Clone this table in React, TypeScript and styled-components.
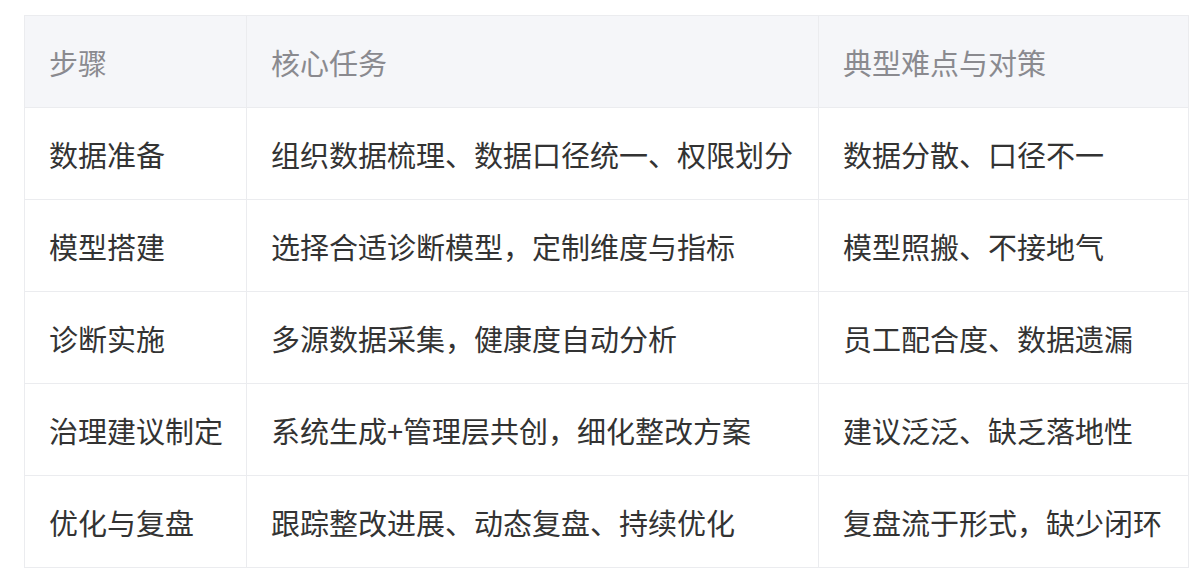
import React from "react";
import styled, { createGlobalStyle } from "styled-components";

const Global = createGlobalStyle`
  html, body { margin: 0; padding: 0; background: #ffffff; }
  body { font-family: "Noto Sans CJK SC", "Noto Sans", sans-serif; }
`;

const Page = styled.div`
  padding: 15px 12px 0 24px;
`;

const Table = styled.table`
  border-collapse: collapse;
  table-layout: fixed;
  width: 1164px;
  border: 1px solid #ebecef;
`;

const Col = styled.col<{ $w: number }>`
  width: ${(p) => p.$w}px;
`;

const HeadCell = styled.th`
  height: 91px;
  padding: 0 24px;
  text-align: left;
  vertical-align: middle;
  background: #f5f6f9;
  color: #8a8a8f;
  font-size: 29px;
  font-weight: 400;
  border: 1px solid #ebecef;
  white-space: nowrap;
`;

const Cell = styled.td`
  height: 91px;
  padding: 0 24px;
  text-align: left;
  vertical-align: middle;
  color: #333333;
  font-size: 29px;
  font-weight: 400;
  border: 1px solid #ebecef;
  white-space: nowrap;
`;

const rows = [
  ["数据准备", "组织数据梳理、数据口径统一、权限划分", "数据分散、口径不一"],
  ["模型搭建", "选择合适诊断模型，定制维度与指标", "模型照搬、不接地气"],
  ["诊断实施", "多源数据采集，健康度自动分析", "员工配合度、数据遗漏"],
  ["治理建议制定", "系统生成+管理层共创，细化整改方案", "建议泛泛、缺乏落地性"],
  ["优化与复盘", "跟踪整改进展、动态复盘、持续优化", "复盘流于形式，缺少闭环"],
];

export default function App() {
  return (
    <>
      <Global />
      <Page>
        <Table>
          <colgroup>
            <Col $w={222} />
            <Col $w={572} />
            <Col $w={370} />
          </colgroup>
          <thead>
            <tr>
              <HeadCell>步骤</HeadCell>
              <HeadCell>核心任务</HeadCell>
              <HeadCell>典型难点与对策</HeadCell>
            </tr>
          </thead>
          <tbody>
            {rows.map((r) => (
              <tr key={r[0]}>
                {r.map((c) => (
                  <Cell key={c}>{c}</Cell>
                ))}
              </tr>
            ))}
          </tbody>
        </Table>
      </Page>
    </>
  );
}
